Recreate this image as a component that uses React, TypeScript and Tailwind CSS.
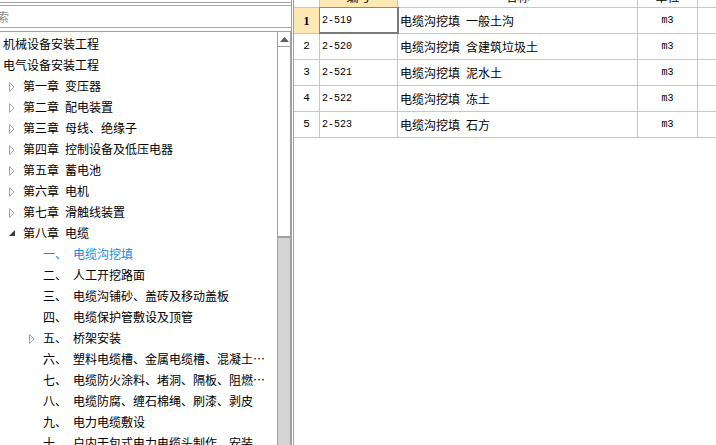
type TreeNode = {
  level: number
  head: string
  name?: string
  arrow?: "open" | "closed"
  active?: boolean
}

const tree: TreeNode[] = [
  { level: 0, head: "机械设备安装工程", arrow: "closed" },
  { level: 0, head: "电气设备安装工程", arrow: "open" },
  { level: 1, head: "第一章", name: "变压器", arrow: "closed" },
  { level: 1, head: "第二章", name: "配电装置", arrow: "closed" },
  { level: 1, head: "第三章", name: "母线、绝缘子", arrow: "closed" },
  { level: 1, head: "第四章", name: "控制设备及低压电器", arrow: "closed" },
  { level: 1, head: "第五章", name: "蓄电池", arrow: "closed" },
  { level: 1, head: "第六章", name: "电机", arrow: "closed" },
  { level: 1, head: "第七章", name: "滑触线装置", arrow: "closed" },
  { level: 1, head: "第八章", name: "电缆", arrow: "open" },
  { level: 2, head: "一、", name: "电缆沟挖填", active: true },
  { level: 2, head: "二、", name: "人工开挖路面" },
  { level: 2, head: "三、", name: "电缆沟铺砂、盖砖及移动盖板" },
  { level: 2, head: "四、", name: "电缆保护管敷设及顶管" },
  { level: 2, head: "五、", name: "桥架安装", arrow: "closed" },
  { level: 2, head: "六、", name: "塑料电缆槽、金属电缆槽、混凝土…" },
  { level: 2, head: "七、", name: "电缆防火涂料、堵洞、隔板、阻燃…" },
  { level: 2, head: "八、", name: "电缆防腐、缠石棉绳、刷漆、剥皮" },
  { level: 2, head: "九、", name: "电力电缆敷设" },
  { level: 2, head: "十、", name: "户内干包式电力电缆头制作、安装" },
]

const indent = ["pl-0", "pl-[20px]", "pl-[40px]"]

const rows = [
  { no: 1, code: "2-519", kind: "一般土沟" },
  { no: 2, code: "2-520", kind: "含建筑垃圾土" },
  { no: 3, code: "2-521", kind: "泥水土" },
  { no: 4, code: "2-522", kind: "冻土" },
  { no: 5, code: "2-523", kind: "石方" },
]

function Arrow({ type }: { type?: "open" | "closed" }) {
  if (type === "closed")
    return (
      <svg width="6" height="10" viewBox="0 0 6 10" className="mt-[2px]">
        <path d="M0.5 0.5 L5 5 L0.5 9.5 Z" fill="#fff" stroke="#a6a6a6" />
      </svg>
    )
  if (type === "open")
    return (
      <svg width="6" height="6" viewBox="0 0 6 6" className="mt-[1px]">
        <path d="M6 0 V6 H0 Z" fill="#3c3c3c" />
      </svg>
    )
  return null
}

export default function App() {
  return (
    <div className="w-[716px] h-[445px] flex overflow-hidden bg-white text-black font-['Noto_Sans_CJK_SC','Liberation_Sans',sans-serif] text-[12px]">
      {/* left: search + tree */}
      <div className="w-[292px] shrink-0 h-full flex flex-col border-r border-[#a0a0a0]">
        <div className="h-[3px] shrink-0 border-b border-[#a0a0a0]" />
        <div className="h-[23px] shrink-0 mt-[2px] border-y border-[#a8a8a8] flex items-center overflow-hidden">
          <span className="-ml-[15px] text-[#8a8a8a] whitespace-nowrap">搜索</span>
        </div>
        <div className="flex flex-1 min-h-0 mt-[3px] border-t border-[#a0a0a0]">
          <div className="flex-1 overflow-hidden pt-px">
            <div className="-ml-[17px]">
              {tree.map((n, i) => (
                <div
                  key={i}
                  className={`flex items-center h-[21px] whitespace-nowrap ${indent[n.level]} ${n.active ? "text-[#0b8de8]" : ""}`}
                >
                  <div className="w-[20px] shrink-0 flex items-center pl-[6px]">
                    <Arrow type={n.arrow} />
                  </div>
                  <span>{n.head}</span>
                  {n.name && (
                    <>
                      <span className="inline-block w-[6px]" />
                      <span>{n.name}</span>
                    </>
                  )}
                </div>
              ))}
            </div>
          </div>
          <div className="w-[14px] shrink-0 border-x border-[#a0a0a0] flex flex-col">
            <div className="h-[14px] shrink-0 flex items-center justify-center">
              <svg width="9" height="5" viewBox="0 0 9 5">
                <path d="M4.5 0 L9 5 H0 Z" fill="#5c5c5c" />
              </svg>
            </div>
            <div className="h-[192px] shrink-0 bg-white border-t border-b-2 border-[#a0a0a0]" />
            <div className="flex-1 bg-[#d4d4d4]" />
          </div>
        </div>
      </div>

      <div className="w-px shrink-0" />

      {/* right: table */}
      <div className="flex-1 h-full border-l border-[#a0a0a0] overflow-hidden">
        <div className="-mt-[18px]">
          <div className="flex h-[26px] border-b border-[#c6c6c6]">
            <div className="w-[26px] shrink-0 border-r border-[#c6c6c6]" />
            <div className="w-[78px] shrink-0 border-r border-[#c6c6c6] bg-[#fde8b3] pt-[4px] flex items-center justify-center">
              编号
            </div>
            <div className="w-[240px] shrink-0 border-r border-[#c6c6c6] pt-[4px] flex items-center justify-center">
              名称
            </div>
            <div className="w-[60px] shrink-0 border-r border-[#c6c6c6] pt-[4px] flex items-center justify-center">
              单位
            </div>
            <div className="flex-1" />
          </div>

          {rows.map((r) => (
            <div key={r.no} className="flex h-[26px] border-b border-[#c6c6c6]">
              <div
                className={`w-[26px] shrink-0 border-r border-[#c6c6c6] flex items-center justify-center ${
                  r.no === 1
                    ? "bg-[#fde8b3] font-['Liberation_Serif',serif] font-bold text-[12px]"
                    : "font-['Liberation_Mono',monospace] text-[11px]"
                }`}
              >
                {r.no}
              </div>
              <div className="relative w-[78px] shrink-0 border-r border-[#c6c6c6] flex items-center pl-[2px] font-['Liberation_Mono',monospace] text-[10px]">
                {r.code}
                {r.no === 1 && (
                  <div className="absolute -left-px -top-px -right-[2px] -bottom-px border-l border-t border-r-2 border-b-2 border-l-[#3ba0d8] border-t-[#3ba0d8] border-r-[#7a7a7a] border-b-[#7a7a7a]" />
                )}
              </div>
              <div className="w-[240px] shrink-0 border-r border-[#c6c6c6] flex items-center pl-[2px] whitespace-nowrap">
                <span>电缆沟挖填</span>
                <span className="inline-block w-[6px]" />
                <span>{r.kind}</span>
              </div>
              <div className="w-[60px] shrink-0 border-r border-[#c6c6c6] flex items-center justify-center font-['Liberation_Mono',monospace] text-[10px]">
                m3
              </div>
              <div className="flex-1" />
            </div>
          ))}
        </div>
      </div>
    </div>
  )
}
